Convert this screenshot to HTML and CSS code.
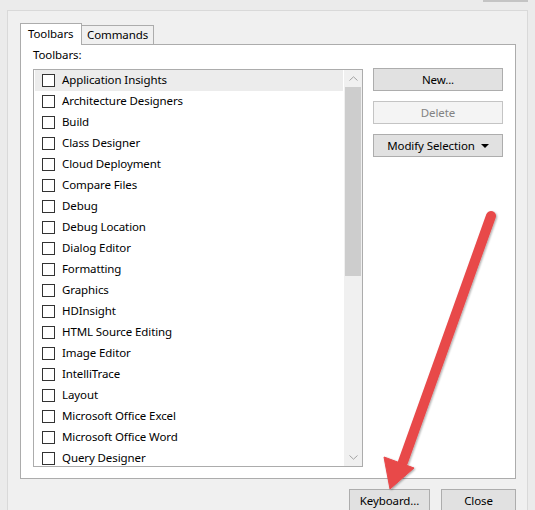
FILE: index.html
```html
<!DOCTYPE html>
<html>
<head>
<meta charset="utf-8">
<link rel="stylesheet" href="styles.css">
</head>
<body>
<div class="window">
  <div class="titlebar">
    <span class="title">Customize</span>
    <span class="title-btn"></span>
  </div>
  <div class="frame">
    <div class="tabs">
      <div class="tab active">Toolbars</div>
      <div class="tab">Commands</div>
    </div>
    <div class="panel">
      <div class="label">Toolbars:</div>
      <div class="content">
        <div class="listbox">
          <div class="items">
            <div class="row hover"><span class="cb"></span><span class="t">Application Insights</span></div>
            <div class="row"><span class="cb"></span><span class="t">Architecture Designers</span></div>
            <div class="row"><span class="cb"></span><span class="t">Build</span></div>
            <div class="row"><span class="cb"></span><span class="t">Class Designer</span></div>
            <div class="row"><span class="cb"></span><span class="t">Cloud Deployment</span></div>
            <div class="row"><span class="cb"></span><span class="t">Compare Files</span></div>
            <div class="row"><span class="cb"></span><span class="t">Debug</span></div>
            <div class="row"><span class="cb"></span><span class="t">Debug Location</span></div>
            <div class="row"><span class="cb"></span><span class="t">Dialog Editor</span></div>
            <div class="row"><span class="cb"></span><span class="t">Formatting</span></div>
            <div class="row"><span class="cb"></span><span class="t">Graphics</span></div>
            <div class="row"><span class="cb"></span><span class="t">HDInsight</span></div>
            <div class="row"><span class="cb"></span><span class="t">HTML Source Editing</span></div>
            <div class="row"><span class="cb"></span><span class="t">Image Editor</span></div>
            <div class="row"><span class="cb"></span><span class="t">IntelliTrace</span></div>
            <div class="row"><span class="cb"></span><span class="t">Layout</span></div>
            <div class="row"><span class="cb"></span><span class="t">Microsoft Office Excel</span></div>
            <div class="row"><span class="cb"></span><span class="t">Microsoft Office Word</span></div>
            <div class="row"><span class="cb"></span><span class="t">Query Designer</span></div>
          </div>
          <div class="scrollbar">
            <div class="sb-arrow">
              <svg width="9" height="5" viewBox="0 0 9 5"><path d="M0.5 4.5 L4.5 0.8 L8.5 4.5" fill="none" stroke="#a3a3a3" stroke-width="1"/></svg>
            </div>
            <div class="sb-thumb"></div>
            <div class="sb-track"></div>
            <div class="sb-arrow">
              <svg width="9" height="5" viewBox="0 0 9 5"><path d="M0.5 0.5 L4.5 4.2 L8.5 0.5" fill="none" stroke="#a3a3a3" stroke-width="1"/></svg>
            </div>
          </div>
        </div>
        <div class="buttons">
          <div class="btn">New...</div>
          <div class="btn disabled">Delete</div>
          <div class="btn">Modify Selection <span class="caret"></span></div>
        </div>
      </div>
    </div>
    <div class="footer">
      <div class="btn keyboard">Keyboard...</div>
      <div class="btn close">Close</div>
    </div>
  </div>
  <svg class="arrow" width="535" height="510" viewBox="0 0 535 510">
    <defs>
      <filter id="sh" x="-20%" y="-20%" width="140%" height="140%">
        <feGaussianBlur in="SourceAlpha" stdDeviation="1.2"/>
        <feOffset dx="1" dy="1" result="b"/>
        <feComponentTransfer><feFuncA type="linear" slope="0.35"/></feComponentTransfer>
        <feMerge><feMergeNode/><feMergeNode in="SourceGraphic"/></feMerge>
      </filter>
    </defs>
    <g filter="url(#sh)" fill="#e8484a" stroke="#e8484a">
      <line x1="491" y1="216" x2="403" y2="462" stroke-width="10" stroke-linecap="round"/>
      <polygon points="384,457 414,468 390,489" stroke-width="1" stroke-linejoin="round"/>
    </g>
  </svg>
</div>
</body>
</html>
```

FILE: styles.css
```css
* { box-sizing: border-box; }
html, body {
  margin: 0;
  padding: 0;
}
body {
  width: 535px;
  height: 510px;
  overflow: hidden;
  background: #ebebeb;
  font-family: "Noto Sans", "Open Sans", sans-serif;
  font-size: 11.5px;
  letter-spacing: -0.1px;
  color: #000;
}
.window {
  position: relative;
  width: 535px;
  height: 510px;
}
.titlebar {
  height: 10px;
  display: flex;
  align-items: flex-start;
  overflow: hidden;
}
.title {
  margin-left: 235px;
  margin-top: -12px;
  line-height: 12px;
  font-size: 12px;
  color: #1a1a1a;
}
.title-btn {
  margin-left: auto;
  margin-right: 7px;
  width: 45px;
  height: 2px;
  background: #c4c4c4;
}
.frame {
  margin-left: 7px;
  width: 521px;
  height: 500px;
  border: 1px solid #d9d9d9;
  border-bottom: none;
  background: #f0f0f0;
  padding: 12px 11px 0 12px;
}
.tabs {
  display: flex;
  align-items: flex-end;
  height: 21px;
  position: relative;
  z-index: 1;
}
.tab {
  height: 19px;
  line-height: 18px;
  padding: 0 6px 0 5px;
  border: 1px solid #acacac;
  border-bottom: none;
  background: #f0f0f0;
  width: 72px;
}
.tab.active {
  width: 62px;
  height: 22px;
  line-height: 20px;
  background: #fff;
  padding: 0 6px 0 7px;
  margin-bottom: -1px;
}
.tab + .tab { border-left: none; }
.panel {
  width: 496px;
  height: 435px;
  border: 1px solid #acacac;
  background: #fff;
  padding: 2px 12px 0 12px;
}
.label {
  height: 21px;
  line-height: 16px;
}
.content {
  display: flex;
  align-items: flex-start;
  gap: 10px;
}
.listbox {
  margin-top: 1px;
  width: 330px;
  height: 398px;
  border: 1px solid #acacac;
  display: flex;
  overflow: hidden;
}
.items {
  flex: 1;
  padding: 0 1px;
  overflow: hidden;
}
.row {
  height: 21px;
  display: flex;
  align-items: center;
  padding-left: 7px;
  white-space: nowrap;
}
.row .t {
  line-height: 16px;
  margin-bottom: 2px;
}
.row.hover { background: #ececec; }
.cb {
  width: 13px;
  height: 13px;
  border: 1px solid #333;
  background: #fff;
  margin-right: 7px;
  flex: none;
}
.scrollbar {
  width: 18px;
  flex: none;
  background: #f0f0f0;
  display: flex;
  flex-direction: column;
}
.sb-arrow {
  height: 17px;
  display: flex;
  align-items: center;
  justify-content: center;
}
.sb-thumb {
  height: 189px;
  margin: 0 1px;
  background: #cdcdcd;
}
.sb-track { flex: 1; }
.buttons {
  display: flex;
  flex-direction: column;
  gap: 10px;
}
.btn {
  height: 23px;
  border: 1px solid #adadad;
  background: #e1e1e1;
  display: flex;
  align-items: center;
  justify-content: center;
  line-height: 21px;
}
.buttons .btn { width: 130px; }
.btn.disabled {
  background: #f4f4f4;
  border-color: #c4c4c4;
  color: #838383;
}
.caret {
  display: inline-block;
  width: 0;
  height: 0;
  border-left: 4px solid transparent;
  border-right: 4px solid transparent;
  border-top: 4px solid #000;
  margin-left: 6px;
}
.footer {
  display: flex;
  justify-content: flex-end;
  gap: 11px;
  margin-top: 10px;
}
.keyboard { width: 81px; }
.close { width: 75px; }
.arrow {
  position: absolute;
  left: 0;
  top: 0;
  pointer-events: none;
}
```
